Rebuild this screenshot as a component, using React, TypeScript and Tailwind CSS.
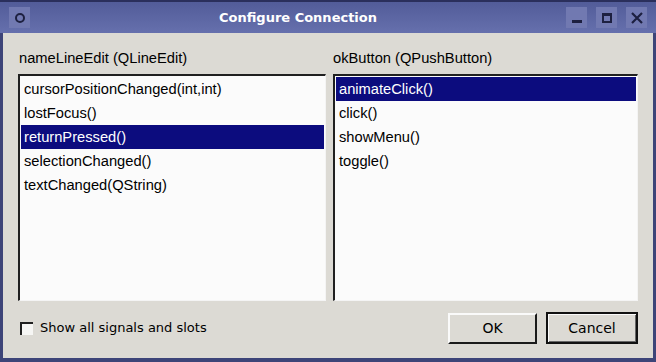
import React from "react";

const leftItems = [
  "cursorPositionChanged(int,int)",
  "lostFocus()",
  "returnPressed()",
  "selectionChanged()",
  "textChanged(QString)",
];
const rightItems = ["animateClick()", "click()", "showMenu()", "toggle()"];

function ListBox({ items, selected }: { items: string[]; selected: number }) {
  return (
    <div className="h-[227px] border-t-2 border-l-2 border-t-[#202020] border-l-[#202020] border-r border-b border-r-[#f4f4f4] border-b-[#f4f4f4] bg-[#fbfbfb] pt-[1px] px-[1px]">
      {items.map((it, i) => (
        <div
          key={it}
          className={
            "h-[24px] leading-[24px] pl-[3px] text-[14.7px] " +
            (i === selected ? "bg-[#0c0c7e] text-white" : "text-black")
          }
        >
          {it}
        </div>
      ))}
    </div>
  );
}

function TitleBtn({ children }: { children: React.ReactNode }) {
  return (
    <div className="w-[21px] h-[21px] bg-[#7179b1] flex items-center justify-center">
      {children}
    </div>
  );
}

export default function App() {
  return (
    <div
      className="w-[656px] h-[362px] flex flex-col bg-[#3d4478] overflow-hidden"
      style={{ fontFamily: '"Liberation Sans", Arial, sans-serif' }}
    >
      {/* title bar */}
      <div className="h-[33px] border-t-[2px] border-t-[#2a2f5c] bg-gradient-to-b from-[#525c99] to-[#6670ad] flex items-center px-[9px] relative">
        <TitleBtn>
          <div className="w-[10px] h-[10px] rounded-full border-2 border-[#1d2040]" />
        </TitleBtn>
        <div
          className="flex-1 text-center text-white font-bold text-[13px]"
          style={{ fontFamily: '"DejaVu Sans", Verdana, sans-serif' }}
        >
          Configure Connection
        </div>
        <div className="flex gap-[9px]">
          <TitleBtn>
            <div className="w-[10px] h-[3px] bg-[#1d2040] mt-[8px]" />
          </TitleBtn>
          <TitleBtn>
            <div className="w-[10px] h-[10px] border-2 border-t-[3px] border-[#1d2040]" />
          </TitleBtn>
          <TitleBtn>
            <svg width="12" height="12" viewBox="0 0 12 12">
              <path d="M1 1 L11 11 M11 1 L1 11" stroke="#1d2040" strokeWidth="2.2" />
            </svg>
          </TitleBtn>
        </div>
      </div>
      {/* body */}
      <div className="flex-1 mx-[3px] mb-[4px] bg-[#dcdad4] px-[15px] pt-[15px] flex flex-col">
        <div className="grid grid-cols-[308px_305px] gap-[7px]">
          <div className="flex flex-col">
            <div className="h-[20px] leading-[20px] text-[14.7px] text-black mb-[6px] pl-[1px]">
              nameLineEdit (QLineEdit)
            </div>
            <ListBox items={leftItems} selected={2} />
          </div>
          <div className="flex flex-col">
            <div className="h-[20px] leading-[20px] text-[14.7px] text-black mb-[6px]">
              okButton (QPushButton)
            </div>
            <ListBox items={rightItems} selected={0} />
          </div>
        </div>
        <div
          className="flex items-center mt-[11px]"
          style={{ fontFamily: '"DejaVu Sans", Verdana, sans-serif' }}
        >
          <div className="flex items-center flex-1 pl-[2px]">
            <div className="w-[13px] h-[13px] border-t-2 border-l-2 border-t-[#202020] border-l-[#202020] bg-[#f6f6f4]" />
            <span className="ml-[7px] text-[13px] text-black">Show all signals and slots</span>
          </div>
          <button className="w-[89px] h-[31px] border-t-2 border-l-2 border-t-[#fafafa] border-l-[#fafafa] border-r-2 border-b-2 border-r-[#1a1a1a] border-b-[#1a1a1a] bg-[#dcdad4] text-[14px] text-black">
            OK
          </button>
          <button className="ml-[9px] w-[92px] h-[32px] border-2 border-[#111] bg-[#dcdad4] text-[14px] text-black shadow-[inset_1px_1px_0_#fafafa,inset_-1px_-1px_0_#666]">
            Cancel
          </button>
        </div>
      </div>
    </div>
  );
}
